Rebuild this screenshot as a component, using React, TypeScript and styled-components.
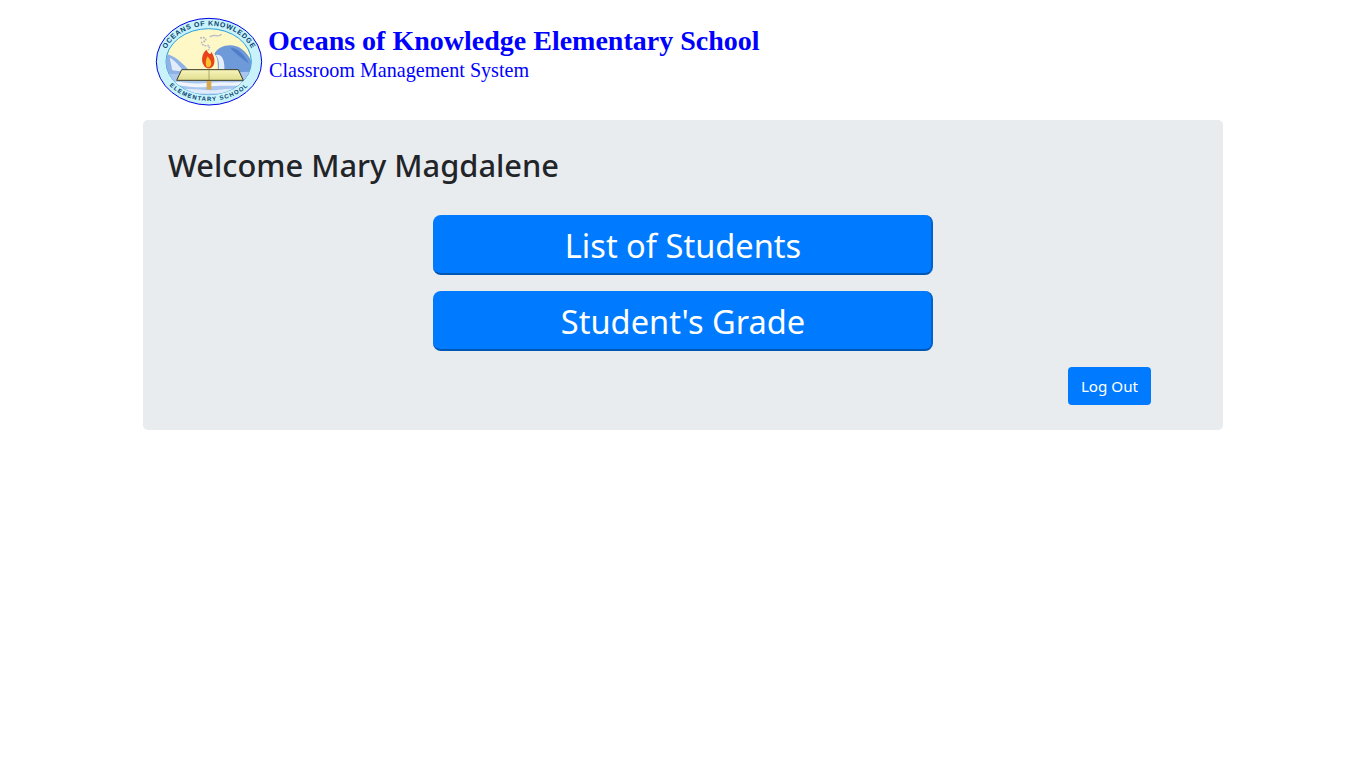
import React from "react";
import styled, { createGlobalStyle } from "styled-components";

const Global = createGlobalStyle`
  html, body { margin: 0; padding: 0; background: #fff; }
  body { font-family: "Noto Sans", "Open Sans", sans-serif; color: #212529; }
`;

const Container = styled.div`
  width: 1080px;
  margin: 0 auto;
  display: flex;
  flex-direction: column;
`;

const Banner = styled.header`
  height: 120px;
  display: flex;
  align-items: flex-start;
  padding: 15px 0 0 11px;
  box-sizing: border-box;
`;

const Logo = styled.svg`
  width: 112px;
  height: 94px;
  flex: none;
`;

const BannerText = styled.div`
  margin-left: 2px;
  display: flex;
  flex-direction: column;
  color: #0000ff;
  font-family: "Liberation Serif", serif;
`;

const SchoolName = styled.div`
  font-size: 28px;
  font-weight: 700;
  line-height: 34px;
  margin-top: 9px;
`;

const SystemName = styled.div`
  font-size: 20.1px;
  line-height: 24px;
  margin-left: 1px;
`;

const Panel = styled.main`
  background: #e9ecef;
  border-radius: 4.8px;
  height: 310px;
  box-sizing: border-box;
  padding: 26px 25px 0;
  display: flex;
  flex-direction: column;
`;

const Welcome = styled.h3`
  margin: 0;
  font-size: 30.8px;
  font-weight: 500;
  line-height: 38px;
  color: #212529;
`;

const Menu = styled.nav`
  margin-top: 31px;
  display: flex;
  flex-direction: column;
  align-items: center;
  gap: 16px;
`;

const MenuButton = styled.button`
  width: 500px;
  height: 60px;
  box-sizing: border-box;
  background: #007bff;
  color: #fff;
  border: 0;
  border-right: 2px solid #0062cc;
  border-bottom: 2px solid #0056b3;
  border-radius: 8px;
  font-family: inherit;
  font-size: 32.6px;
  padding: 2px 0 0 2px;
`;

const Footer = styled.div`
  margin-top: 16px;
  display: flex;
  justify-content: flex-end;
  padding-right: 47px;
`;

const LogOut = styled.button`
  width: 83px;
  height: 38px;
  background: #007bff;
  color: #fff;
  border: 0;
  border-radius: 4px;
  font-family: inherit;
  font-size: 15.2px;
  padding: 0;
`;

function SchoolLogo() {
  return (
    <Logo viewBox="33 30 336 282" role="img" aria-label="School logo">
      <defs>
        <path id="arcTop" d="M60 172 A138 110 0 0 1 336 172" />
        <path id="arcBottom" d="M48 168 A150 120 0 0 0 348 168" />
        <clipPath id="inner">
          <ellipse cx="197" cy="170" rx="128" ry="99" />
        </clipPath>
        <linearGradient id="page" x1="0" y1="0" x2="0" y2="1">
          <stop offset="0" stopColor="#f8f5bd" />
          <stop offset="1" stopColor="#dfdc8e" />
        </linearGradient>
      </defs>
      <ellipse cx="198" cy="170" rx="158" ry="130" fill="#c9f2fb" stroke="#0000e0" strokeWidth="3" />
      <ellipse cx="197" cy="170" rx="128" ry="99" fill="#fdf8c6" stroke="#2aa0dc" strokeWidth="3" />
      <g clipPath="url(#inner)">
        {/* left swell */}
        <path d="M70 148 C92 150 116 172 140 198 L150 240 L60 240 Z" fill="#8fb2e6" />
        <path d="M80 158 C96 166 108 182 124 200 L88 196 Z" fill="#e3ecfa" />
        {/* big wave */}
        <path d="M214 146 C226 122 268 110 296 132 C312 144 322 160 330 178 L330 222 L226 222 C222 190 230 162 214 146 Z" fill="#6f9ada" />
        <path d="M218 150 C236 146 246 164 244 196 L232 216 L224 216 C228 190 232 166 218 150 Z" fill="#e4edfb" />
        <path d="M262 128 C288 130 304 150 318 176 C298 160 278 148 262 128 Z" fill="#4f7ec9" />
        {/* sea */}
        <path d="M60 208 L335 200 L335 280 L60 280 Z" fill="#a8c6ee" />
        <path d="M75 232 C110 225 140 240 190 234 C240 228 280 238 325 226 L325 236 C280 248 240 238 190 246 C140 250 110 236 75 242 Z" fill="#f0f5fc" />
        <path d="M110 254 C150 248 190 260 230 254 C255 250 275 252 295 248 L290 258 C260 262 230 266 190 266 C160 266 130 260 110 262 Z" fill="#dfeafa" />
        {/* smoke */}
        <path d="M172 100 C186 92 196 108 180 110 C170 112 180 124 192 122 C204 120 198 130 196 136" fill="none" stroke="#b6b6c6" strokeWidth="5" strokeDasharray="5 3" />
        <path d="M200 96 C214 84 224 100 236 88" fill="none" stroke="#bcbccb" strokeWidth="4" />
      </g>
      {/* torch */}
      <rect x="191" y="222" width="14" height="32" fill="#d9a94e" />
      {/* book */}
      <path d="M116 194 L286 194 L301 226 L101 226 Z" fill="url(#page)" stroke="#3d3d22" strokeWidth="3" />
      <path d="M198 194 V226" stroke="#8b8850" strokeWidth="2" />
      {/* flame */}
      <path d="M190 134 C176 146 174 168 182 180 C188 194 206 194 212 180 C218 166 212 150 204 140 C204 152 198 148 190 134 Z" fill="#e8431c" />
      <path d="M194 154 C188 164 186 176 191 186 C199 190 207 182 204 170 C202 164 198 160 194 154 Z" fill="#fcc22c" />
      <text fontFamily="'Liberation Sans', sans-serif" fontSize="21" fontWeight="700" fill="#05426e" letterSpacing="2">
        <textPath href="#arcTop" startOffset="50%" textAnchor="middle">OCEANS OF KNOWLEDGE</textPath>
      </text>
      <text fontFamily="'Liberation Sans', sans-serif" fontSize="18" fontWeight="700" fill="#05426e" letterSpacing="3.4">
        <textPath href="#arcBottom" startOffset="50%" textAnchor="middle">ELEMENTARY SCHOOL</textPath>
      </text>
    </Logo>
  );
}

export default function App() {
  return (
    <>
      <Global />
      <Container>
        <Banner>
          <SchoolLogo />
          <BannerText>
            <SchoolName>Oceans of Knowledge Elementary School</SchoolName>
            <SystemName>Classroom Management System</SystemName>
          </BannerText>
        </Banner>
        <Panel>
          <Welcome>Welcome Mary Magdalene</Welcome>
          <Menu>
            <MenuButton>List of Students</MenuButton>
            <MenuButton>Student's Grade</MenuButton>
          </Menu>
          <Footer>
            <LogOut>Log Out</LogOut>
          </Footer>
        </Panel>
      </Container>
    </>
  );
}
